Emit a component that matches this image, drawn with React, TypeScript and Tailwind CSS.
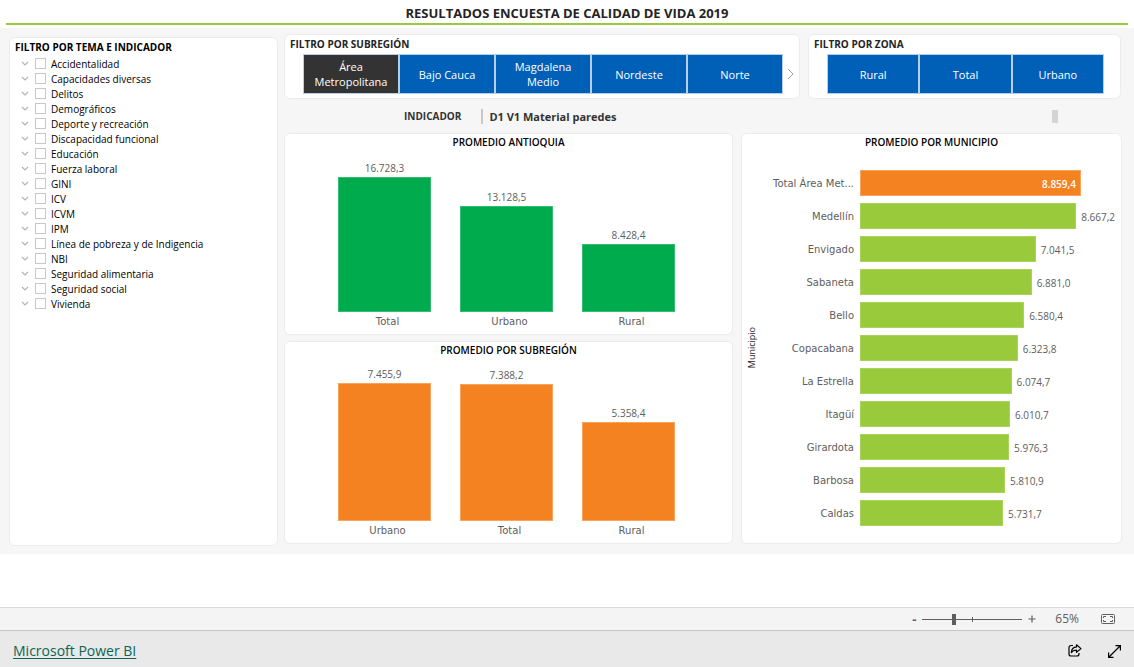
import React, { useState } from 'react';

const temas = [
    'Accidentalidad',
    'Capacidades diversas',
    'Delitos',
    'Demográficos',
    'Deporte y recreación',
    'Discapacidad funcional',
    'Educación',
    'Fuerza laboral',
    'GINI',
    'ICV',
    'ICVM',
    'IPM',
    'Línea de pobreza y de Indigencia',
    'NBI',
    'Seguridad alimentaria',
    'Seguridad social',
    'Vivienda',
];

const subregiones = ['Área Metropolitana', 'Bajo Cauca', 'Magdalena Medio', 'Nordeste', 'Norte'];
const zonas = ['Rural', 'Total', 'Urbano'];

interface Dato {
    label: string;
    value: number;
}

const antioquia: Dato[] = [
    { label: 'Total', value: 16728.3 },
    { label: 'Urbano', value: 13128.5 },
    { label: 'Rural', value: 8428.4 },
];

const subregion: Dato[] = [
    { label: 'Urbano', value: 7455.9 },
    { label: 'Total', value: 7388.2 },
    { label: 'Rural', value: 5358.4 },
];

const municipios: Dato[] = [
    { label: 'Total Área Met...', value: 8859.4 },
    { label: 'Medellín', value: 8667.2 },
    { label: 'Envigado', value: 7041.5 },
    { label: 'Sabaneta', value: 6881.0 },
    { label: 'Bello', value: 6580.4 },
    { label: 'Copacabana', value: 6323.8 },
    { label: 'La Estrella', value: 6074.7 },
    { label: 'Itagüí', value: 6010.7 },
    { label: 'Girardota', value: 5976.3 },
    { label: 'Barbosa', value: 5810.9 },
    { label: 'Caldas', value: 5731.7 },
];

// 16728.3 -> "16.728,3"
const formatValue = (value: number) => {
    const [whole, decimal] = value.toFixed(1).split('.');
    return `${whole.replace(/\B(?=(\d{3})+$)/g, '.')},${decimal}`;
};

const Panel: React.FC<{ className?: string; children: React.ReactNode }> = ({ className = '', children }) => (
    <section className={`rounded-md border border-[#ececec] bg-white ${className}`}>{children}</section>
);

interface SlicerProps {
    options: string[];
    selected: string | null;
    onSelect: (option: string) => void;
}

const Slicer: React.FC<SlicerProps> = ({ options, selected, onSelect }) => (
    <div className="flex h-10 flex-1">
        {options.map(option => (
            <button
                key={option}
                type="button"
                onClick={() => onSelect(option)}
                aria-pressed={selected === option}
                className={`flex flex-1 basis-0 items-center justify-center border border-[#b5cfe8] px-2 text-[11px] leading-[15px] text-white ${selected === option ? 'bg-[#333333]' : 'bg-[#0060b8]'}`}
            >
                {option}
            </button>
        ))}
    </div>
);

interface ColumnChartProps {
    title: string;
    data: Dato[];
    barClass: string;
    plotHeight: number;
}

const ColumnChart: React.FC<ColumnChartProps> = ({ title, data, barClass, plotHeight }) => {
    const max = Math.max(...data.map(d => d.value));
    return (
        <Panel className="flex flex-col">
            <h2 className="text-center text-[10px] leading-4 font-semibold text-black">{title}</h2>
            <div className="mt-auto grid grid-cols-3 items-end gap-[29px] pr-[57px] pl-[53px]">
                {data.map(d => (
                    <div key={d.label}>
                        <div className="pb-px text-center text-[10px] leading-4 text-[#605e5c]">{formatValue(d.value)}</div>
                        <div className={`border ${barClass}`} style={{ height: Math.round((d.value / max) * plotHeight) }} />
                    </div>
                ))}
            </div>
            <div className="grid grid-cols-3 gap-[29px] pt-0.5 pr-[54px] pb-1 pl-14 font-['DejaVu_Sans',sans-serif] text-[10px] leading-4 text-[#605e5c]">
                {data.map(d => (
                    <div key={d.label} className="text-center">{d.label}</div>
                ))}
            </div>
        </Panel>
    );
};

const MunicipioChart: React.FC = () => {
    const max = municipios[0].value;
    return (
        <Panel className="flex flex-col">
            <h2 className="text-center text-[10px] leading-4 font-semibold text-black">PROMEDIO POR MUNICIPIO</h2>
            <div className="mt-5 flex">
                <div className="flex w-5 items-center justify-center">
                    <span className="rotate-180 text-[9px] leading-3 text-[#252423] [writing-mode:vertical-rl]">Municipio</span>
                </div>
                <div className="flex flex-1 flex-col gap-[7px]">
                    {municipios.map((m, i) => (
                        <div key={m.label} className="flex h-[26px] items-center">
                            <span className="w-[92px] text-right font-['DejaVu_Sans',sans-serif] text-[10px] whitespace-nowrap text-[#605e5c]">{m.label}</span>
                            <div className="ml-1.5 flex h-full flex-1 items-center pr-10">
                                <div
                                    className={`flex h-full shrink-0 items-center justify-end border pt-0.5 pr-1 text-[10px] font-semibold text-white ${i === 0 ? 'border-[#f9a45c] bg-[#f58220]' : 'border-[#a9d45c] bg-[#98ca3c]'}`}
                                    style={{ width: `${(m.value / max) * 100}%` }}
                                >
                                    {i === 0 && formatValue(m.value)}
                                </div>
                                {i > 0 && <span className="pt-0.5 pl-[5px] text-[10px] text-[#605e5c]">{formatValue(m.value)}</span>}
                            </div>
                        </div>
                    ))}
                </div>
            </div>
        </Panel>
    );
};

const ThemeFilter: React.FC = () => (
    <Panel className="mt-[9px] w-[269px] shrink-0 self-stretch px-[5px]">
        <h2 className="text-[10px] leading-[18px] font-bold text-black">FILTRO POR TEMA E INDICADOR</h2>
        <ul className="pl-1.5">
            {temas.map(tema => (
                <li key={tema} className="flex h-[15px] items-center">
                    <button type="button" aria-label={`Expandir ${tema}`} className="w-3.5">
                        <svg viewBox="0 0 8 6" className="h-1.5 w-2" fill="none" stroke="#b3b3b3" strokeWidth="1.2">
                            <path d="M1 1l3 3 3-3" />
                        </svg>
                    </button>
                    <label className="flex items-center gap-[5px] text-[10px] leading-[15px] text-black">
                        <input type="checkbox" className="size-[11px] appearance-none border border-[#c8c8c8] bg-white checked:bg-[#333333]" />
                        <span className="pt-0.5">{tema}</span>
                    </label>
                </li>
            ))}
        </ul>
    </Panel>
);

const ZoomBar: React.FC = () => {
    const [zoom, setZoom] = useState(31);
    return (
        <div className="flex h-6 items-center justify-end border-t border-b border-t-[#dadada] border-b-[#c6c6c6] bg-[#f4f4f4] pr-[19px] text-[#5f5f5f]">
            <button type="button" aria-label="Alejar" className="w-2.5 text-left text-[13px] leading-4 font-bold">-</button>
            <div className="relative flex h-4 w-[100px] items-center">
                <span className="absolute top-1.5 left-[50px] h-[5px] w-px bg-[#5f5f5f]" />
                <input
                    type="range"
                    aria-label="Zoom"
                    value={zoom}
                    onChange={e => setZoom(Number(e.target.value))}
                    className="h-px w-full appearance-none bg-[#5f5f5f] [&::-webkit-slider-thumb]:h-[11px] [&::-webkit-slider-thumb]:w-1 [&::-webkit-slider-thumb]:appearance-none [&::-webkit-slider-thumb]:bg-[#5f5f5f]"
                />
            </div>
            <button type="button" aria-label="Acercar" className="ml-1.5">
                <svg viewBox="0 0 8 8" className="size-2" stroke="currentColor">
                    <path d="M4 0.5v7M0.5 4h7" strokeWidth="1.2" />
                </svg>
            </button>
            <span className="ml-[19px] text-xs">65%</span>
            <button type="button" aria-label="Ajustar a la página" className="ml-[22px]">
                <svg viewBox="0 0 14 10" className="h-2.5 w-3.5" fill="none" stroke="currentColor">
                    <rect x="0.5" y="0.5" width="13" height="9" rx="1" />
                    <path d="M5 2.5H2.5V4M2.5 6v1.5H5M9 2.5h2.5V4M11.5 6v1.5H9" />
                </svg>
            </button>
        </div>
    );
};

const Footer: React.FC = () => (
    <footer className="flex h-9 items-center bg-[#e9e9e9] pr-[13px] pl-[13px] text-black">
        <a href="#" className="pt-1 text-sm text-[#0b6556] underline underline-offset-2">Microsoft Power BI</a>
        <button type="button" aria-label="Compartir" className="ml-auto pt-0.5">
            <svg viewBox="0 0 14 13" className="h-[13px] w-3.5" fill="none" stroke="currentColor" strokeWidth="1.2">
                <path d="M5 1.5H3a2 2 0 0 0-2 2V10a2 2 0 0 0 2 2h6a2 2 0 0 0 2-2V9" />
                <path d="M8.5 0.8l4.500 3.800-4.500 3.700V6.200C6 6.100 4.500 6.800 3.300 8.600 3.500 5.400 5.200 3.200 8.500 2.900z" strokeLinejoin="round" />
            </svg>
        </button>
        <button type="button" aria-label="Pantalla completa" className="ml-[26px] pt-1">
            <svg viewBox="0 0 13 13" className="size-[13px]" fill="none" stroke="currentColor" strokeWidth="1.2">
                <path d="M1 12L12 1M7.5 0.600h4.900v4.900M0.600 7.500v4.900h4.900" />
            </svg>
        </button>
    </footer>
);

const App: React.FC = () => {
    const [region, setRegion] = useState<string | null>('Área Metropolitana');
    const [zona, setZona] = useState<string | null>(null);

    return (
        <div className="flex min-h-screen flex-col bg-white font-['Open_Sans',sans-serif]">
            <header className="h-7 px-1.5">
                <h1 className="border-b-2 border-[#98ca3c] pt-1 pb-px text-center text-[13px] leading-[18px] font-bold text-[#252423]">
                    RESULTADOS ENCUESTA DE CALIDAD DE VIDA 2019
                </h1>
            </header>

            <main className="flex gap-1.5 bg-[#f6f6f6] pr-3 pb-2 pl-[9px]">
                <ThemeFilter />

                <div className="flex flex-1 flex-col pt-1.5 pb-0.5">
                    <div className="grid grid-cols-[516fr_313fr] gap-2 pr-px">
                        <Panel className="h-[65px] px-[5px]">
                            <h2 className="text-[10px] leading-[19px] font-bold text-[#252423]">FILTRO POR SUBREGIÓN</h2>
                            <div className="flex items-center pl-[13px]">
                                <Slicer options={subregiones} selected={region} onSelect={setRegion} />
                                <button type="button" aria-label="Siguiente" className="pl-1">
                                    <svg viewBox="0 0 7 12" className="h-3 w-[7px]" fill="none" stroke="#a0a0a0">
                                        <path d="M1 1l5 5-5 5" />
                                    </svg>
                                </button>
                            </div>
                        </Panel>
                        <Panel className="h-[65px] pr-4 pl-[5px]">
                            <h2 className="text-[10px] leading-[19px] font-bold text-[#252423]">FILTRO POR ZONA</h2>
                            <div className="flex pl-[13px]">
                                <Slicer options={zonas} selected={zona} onSelect={setZona} />
                            </div>
                        </Panel>
                    </div>

                    <div className="flex h-[34px] items-center pr-16 pl-[120px] text-[#333333]">
                        <span className="text-[10px] font-bold">INDICADOR</span>
                        <span className="mr-1.5 ml-5 h-[15px] w-0.5 bg-[#c8c8c8]" />
                        <span className="pt-0.5 text-[11px] font-bold">D1 V1 Material paredes</span>
                        <span className="ml-auto h-[13px] w-1.5 bg-[#d4d4d4]" />
                    </div>

                    <div className="grid grid-cols-[449fr_381fr] gap-2">
                        <div className="flex flex-col gap-1.5">
                            <div className="grid h-[202px]">
                                <ColumnChart title="PROMEDIO ANTIOQUIA" data={antioquia} barClass="border-[#33bd70] bg-[#00ab4e]" plotHeight={135} />
                            </div>
                            <div className="grid h-[203px]">
                                <ColumnChart title="PROMEDIO POR SUBREGIÓN" data={subregion} barClass="border-[#f9a45c] bg-[#f58220]" plotHeight={138} />
                            </div>
                        </div>
                        <MunicipioChart />
                    </div>
                </div>
            </main>

            <div className="mt-auto">
                <ZoomBar />
                <Footer />
            </div>
        </div>
    );
};

export default App;
